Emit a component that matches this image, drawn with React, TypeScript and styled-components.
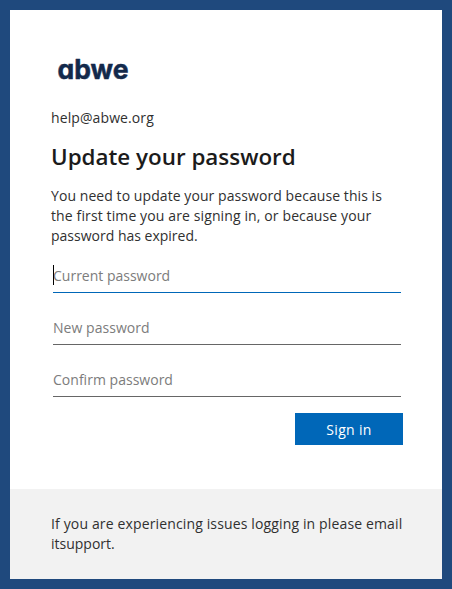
import React from "react";
import styled, { createGlobalStyle } from "styled-components";

const GlobalStyle = createGlobalStyle`
  * { box-sizing: border-box; }
  body {
    margin: 0;
    background: #1f497d;
    color: #303030;
    font-family: "Open Sans", "Noto Sans", sans-serif;
    font-size: 14px;
    font-weight: 400;
    line-height: 20px;
  }
`;

const Page = styled.div`
  height: 589px;
  padding: 10px;
  display: flex;
`;

const Card = styled.main`
  flex: 1;
  display: flex;
  flex-direction: column;
  background: #fff;
`;

const Content = styled.section`
  flex: 1;
  padding: 44px 39px 0 41px;
`;

const Logo = styled.svg`
  display: block;
  width: 90px;
  height: 36px;
  font-family: "Inter", sans-serif;
  font-weight: 700;
  font-size: 26.5px;
  font-feature-settings: "cv11" 1;
  fill: #13294b;
  stroke: #13294b;
  stroke-width: 0.5px;
  stroke-linejoin: round;
`;

const Email = styled.div`
  margin-top: 18px;
  letter-spacing: 0.1px;
`;

const Title = styled.h1`
  margin: 13px 0 0;
  font-size: 22.4px;
  line-height: 32px;
  font-weight: 600;
  color: #1b1b1b;
  white-space: nowrap;
`;

const TextLine = styled.span<{ $spacing: number }>`
  display: block;
  white-space: nowrap;
  letter-spacing: ${(p) => p.$spacing}px;
`;

const Message = styled.p`
  margin: 13px 0 19px;
`;

const Field = styled.div<{ $active?: boolean }>`
  position: relative;
  width: 348px;
  height: 28px;
  margin: 0 0 24px 2px;
  padding-top: 1px;
  border-bottom: 1px solid ${(p) => (p.$active ? "#0067b8" : "#666")};
  color: #7c7c7c;
`;

const Caret = styled.i`
  position: absolute;
  left: 0;
  top: 0;
  width: 1px;
  height: 20px;
  background: #000;
`;

const Actions = styled.div`
  display: flex;
  justify-content: flex-end;
  margin-top: -8px;
`;

const Button = styled.button`
  width: 108px;
  height: 32px;
  padding: 2px 0 0;
  border: 0;
  background: #0067b8;
  color: #fff;
  font: inherit;
  letter-spacing: 0.3px;
`;

const Footer = styled.footer`
  height: 90px;
  padding: 25px 39px 0 41px;
  background: #f2f2f2;
`;

export default function App() {
  return (
    <>
      <GlobalStyle />
      <Page>
        <Card>
          <Content>
            <Logo viewBox="0 0 90 36" role="img" aria-label="abwe">
              <text x="6.5" y="25.3" textLength="71" lengthAdjust="spacingAndGlyphs">abwe</text>
            </Logo>
            <Email>help@abwe.org</Email>
            <Title>Update your password</Title>
            <Message>
              <TextLine $spacing={0.07}>You need to update your password because this is</TextLine>
              <TextLine $spacing={0.12}>the first time you are signing in, or because your</TextLine>
              <TextLine $spacing={0}>password has expired.</TextLine>
            </Message>
            <Field $active>
              <Caret />
              <TextLine $spacing={0}>Current password</TextLine>
            </Field>
            <Field>
              <TextLine $spacing={0.05}>New password</TextLine>
            </Field>
            <Field>
              <TextLine $spacing={0.02}>Confirm password</TextLine>
            </Field>
            <Actions>
              <Button>Sign in</Button>
            </Actions>
          </Content>
          <Footer>
            <TextLine $spacing={0.14}>If you are experiencing issues logging in please email</TextLine>
            <TextLine $spacing={0}>itsupport.</TextLine>
          </Footer>
        </Card>
      </Page>
    </>
  );
}
